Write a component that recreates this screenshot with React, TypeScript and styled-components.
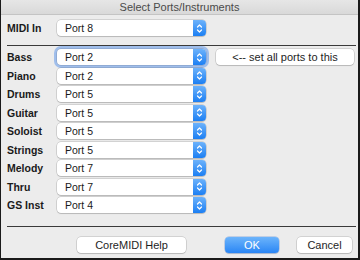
import styled, { createGlobalStyle } from 'styled-components'

const GlobalStyle = createGlobalStyle`
  html, body {
    margin: 0;
    padding: 0;
    background: #ffffff;
  }
  * {
    box-sizing: border-box;
  }
`

const rows = [
  { label: 'Bass', port: 'Port 2' },
  { label: 'Piano', port: 'Port 2' },
  { label: 'Drums', port: 'Port 5' },
  { label: 'Guitar', port: 'Port 5' },
  { label: 'Soloist', port: 'Port 5' },
  { label: 'Strings', port: 'Port 5' },
  { label: 'Melody', port: 'Port 7' },
  { label: 'Thru', port: 'Port 7' },
  { label: 'GS Inst', port: 'Port 4' },
]

function Chevrons() {
  return (
    <svg width="7" height="11" viewBox="0 0 7 11" fill="none" stroke="#ffffff" strokeWidth="1.2" strokeLinecap="round" strokeLinejoin="round">
      <path d="M1.5 4 L3.5 2 L5.5 4" />
      <path d="M1.5 7 L3.5 9 L5.5 7" />
    </svg>
  )
}

function PortSelect({ value, focused }: { value: string; focused?: boolean }) {
  return (
    <Select $focused={focused}>
      <SelectText>{value}</SelectText>
      <Stepper>
        <Chevrons />
      </Stepper>
    </Select>
  )
}

export default function App() {
  return (
    <>
      <GlobalStyle />
      <Window>
        <TitleBar>Select Ports/Instruments</TitleBar>
        <Body>
          <Row>
            <Label>MIDI In</Label>
            <PortSelect value="Port 8" />
          </Row>
          <Separator />
          <PortGrid>
            {rows.map((r, i) => (
              <Row key={r.label}>
                <Label>{r.label}</Label>
                <PortSelect value={r.port} focused={i === 0} />
                {i === 0 && <SetAllButton $width={138}>&lt;-- set all ports to this</SetAllButton>}
              </Row>
            ))}
          </PortGrid>
          <BottomSeparator />
          <Footer>
            <PushButton $width={109}>CoreMIDI Help</PushButton>
            <ButtonGroup>
              <PushButton $width={54} $primary>OK</PushButton>
              <PushButton $width={55}>Cancel</PushButton>
            </ButtonGroup>
          </Footer>
        </Body>
      </Window>
    </>
  )
}

const Window = styled.div`
  width: 360px;
  height: 260px;
  background: #ececec;
  border-left: 1px solid #1a1a1a;
  border-right: 2px solid #1a1a1a;
  border-bottom: 2px solid #1a1a1a;
  display: flex;
  flex-direction: column;
  font-family: 'Liberation Sans', Arial, sans-serif;
  color: #1e1e1e;
  overflow: hidden;
`

const TitleBar = styled.div`
  height: 15px;
  background: linear-gradient(#e6e6e6, #d9d9d9);
  border-bottom: 1px solid #c4c4c4;
  text-align: center;
  font-size: 11px;
  line-height: 14px;
  color: #4a4a4a;
`

const Body = styled.div`
  display: flex;
  flex-direction: column;
  padding: 5px 0 0 6px;
`

const Row = styled.div`
  display: grid;
  grid-template-columns: 50px 149px auto;
  align-items: center;
  height: 16px;
`

const Label = styled.div`
  font-size: 10.5px;
  font-weight: 700;
  color: #1a1a1a;
`

const Select = styled.div<{ $focused?: boolean }>`
  height: 16px;
  width: 149px;
  display: flex;
  align-items: stretch;
  background: #ffffff;
  border-radius: 4px;
  box-shadow: ${(p) =>
    p.$focused
      ? '0 0 0 0.5px rgba(0,0,0,0.2), 0 0 0 3px rgba(110,160,235,0.6)'
      : '0 0 0 0.5px rgba(0,0,0,0.22), 0 1px 1px rgba(0,0,0,0.12)'};
`

const SelectText = styled.div`
  flex: 1;
  padding-left: 8px;
  font-size: 10.5px;
  line-height: 16px;
  color: #1a1a1a;
`

const Stepper = styled.div`
  width: 13px;
  display: flex;
  align-items: center;
  justify-content: center;
  background: linear-gradient(#6cb2fb, #1c7ff3);
  border-radius: 0 4px 4px 0;
`

const Separator = styled.div`
  height: 1px;
  width: 349px;
  background: #3a3a3a;
  margin: 9px 0 3px;
`

const PortGrid = styled.div`
  display: flex;
  flex-direction: column;
  gap: 2.5px;
`

const BottomSeparator = styled.div`
  height: 1px;
  width: 349px;
  background: #3a3a3a;
  margin: 13px 0 10px;
`

const Footer = styled.div`
  display: flex;
  align-items: center;
  padding: 0 6px 0 70px;
`

const ButtonGroup = styled.div`
  display: flex;
  gap: 18px;
  margin-left: auto;
`

const PushButton = styled.div<{ $width: number; $primary?: boolean }>`
  width: ${(p) => p.$width}px;
  height: 16px;
  border-radius: 4px;
  text-align: center;
  font-size: 11px;
  line-height: 16px;
  color: ${(p) => (p.$primary ? '#ffffff' : '#1e1e1e')};
  background: ${(p) => (p.$primary ? 'linear-gradient(#6cb4fb, #2a86f5)' : '#ffffff')};
  box-shadow: ${(p) =>
    p.$primary
      ? '0 0 0 0.5px rgba(20,90,200,0.4), 0 1px 1px rgba(0,0,0,0.12)'
      : '0 0 0 0.5px rgba(0,0,0,0.22), 0 1px 1px rgba(0,0,0,0.12)'};
`

const SetAllButton = styled(PushButton)`
  margin-left: 10px;
`
